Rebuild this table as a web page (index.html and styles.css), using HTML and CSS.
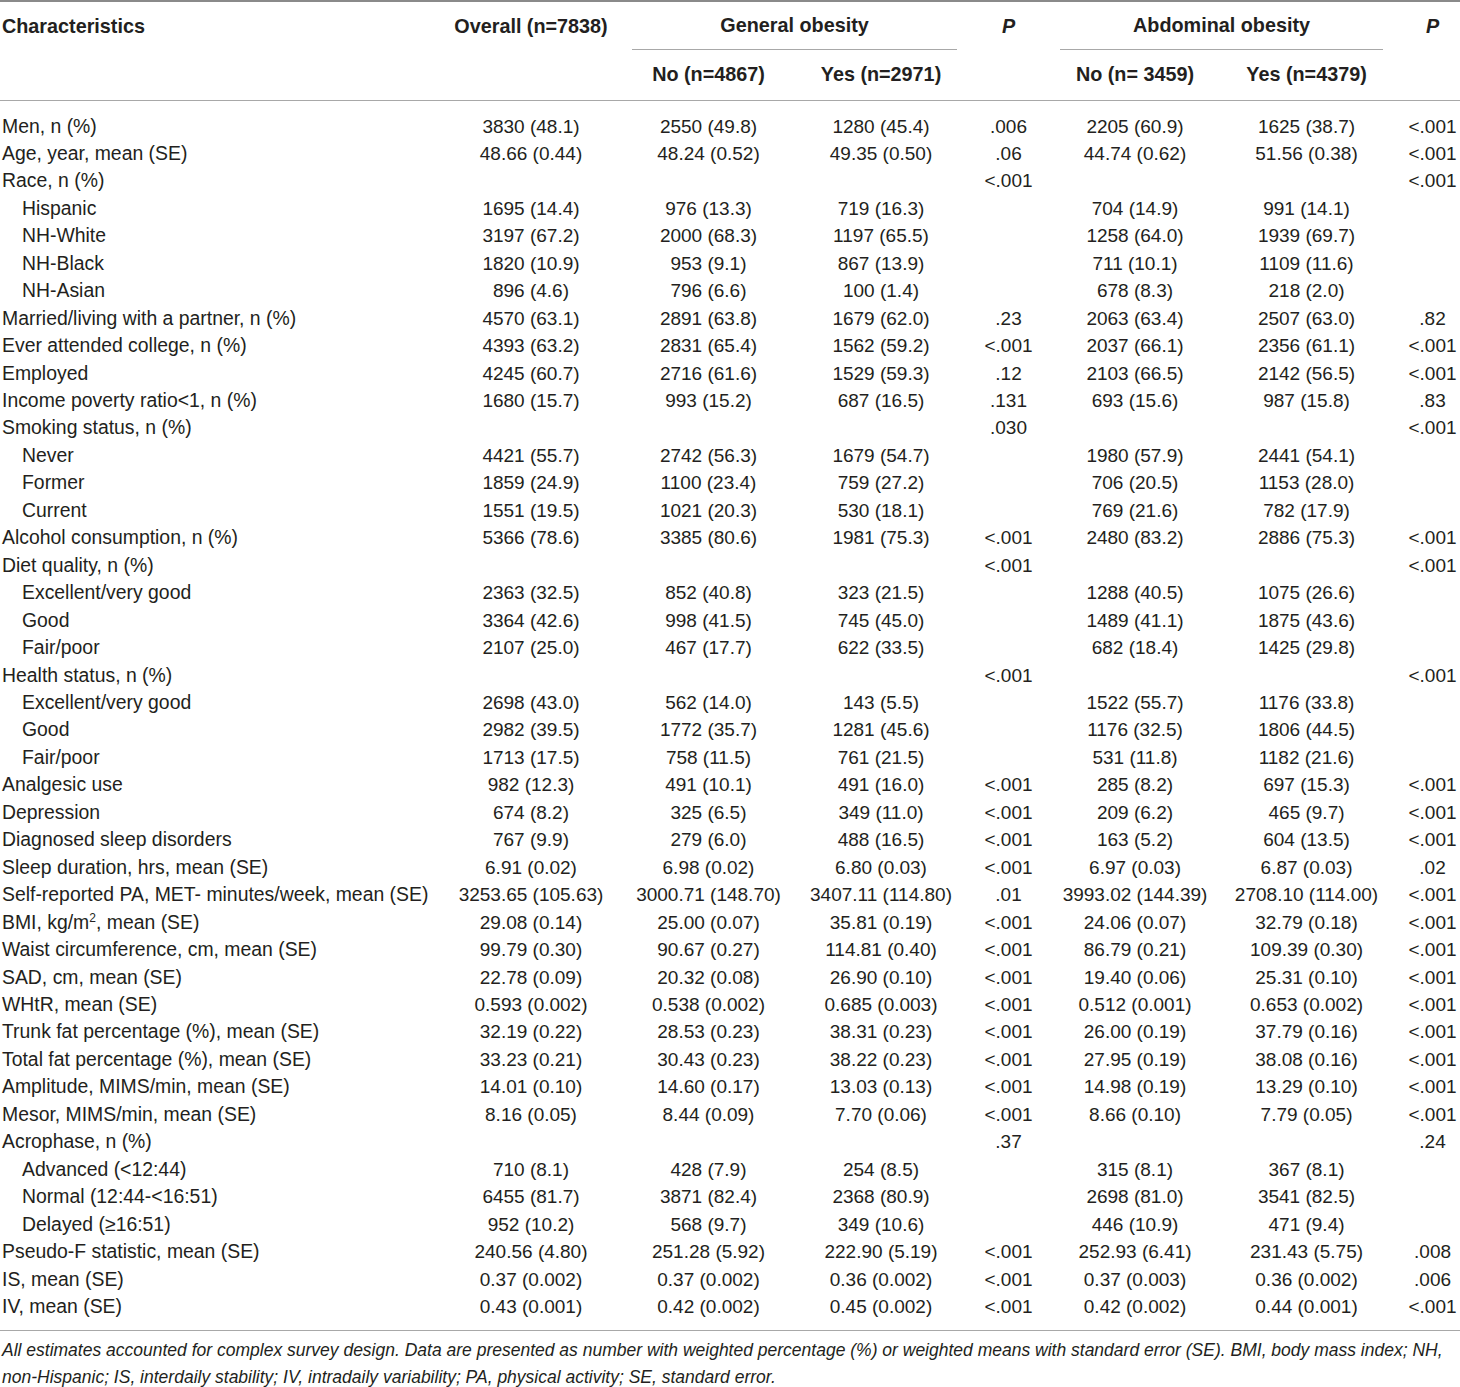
FILE: index.html
```html
<!DOCTYPE html>
<html>
<head>
<meta charset="utf-8">
<link rel="stylesheet" href="styles.css">
</head>
<body>
<div class="page">
<table class="tbl">
<colgroup>
<col class="c-label"><col class="c-overall"><col class="c-gno"><col class="c-gyes"><col class="c-p1"><col class="c-ano"><col class="c-ayes"><col class="c-p2">
</colgroup>
<thead>
<tr class="h1">
<th class="lab top" rowspan="2">Characteristics</th>
<th class="top" rowspan="2">Overall (n=7838)</th>
<th colspan="2"><div class="grp">General obesity</div></th>
<th class="top" rowspan="2"><i>P</i></th>
<th colspan="2"><div class="grp">Abdominal obesity</div></th>
<th class="top p2" rowspan="2"><i>P</i></th>
</tr>
<tr class="h2">
<th>No (n=4867)</th>
<th>Yes (n=2971)</th>
<th>No (n= 3459)</th>
<th>Yes (n=4379)</th>
</tr>
</thead>
<tbody>
<tr><td>Men, n (%)</td><td>3830 (48.1)</td><td>2550 (49.8)</td><td>1280 (45.4)</td><td>.006</td><td>2205 (60.9)</td><td>1625 (38.7)</td><td class="p2">&lt;.001</td></tr>
<tr><td>Age, year, mean (SE)</td><td>48.66 (0.44)</td><td>48.24 (0.52)</td><td>49.35 (0.50)</td><td>.06</td><td>44.74 (0.62)</td><td>51.56 (0.38)</td><td class="p2">&lt;.001</td></tr>
<tr><td>Race, n (%)</td><td></td><td></td><td></td><td>&lt;.001</td><td></td><td></td><td class="p2">&lt;.001</td></tr>
<tr><td class="ind">Hispanic</td><td>1695 (14.4)</td><td>976 (13.3)</td><td>719 (16.3)</td><td></td><td>704 (14.9)</td><td>991 (14.1)</td><td class="p2"></td></tr>
<tr><td class="ind">NH-White</td><td>3197 (67.2)</td><td>2000 (68.3)</td><td>1197 (65.5)</td><td></td><td>1258 (64.0)</td><td>1939 (69.7)</td><td class="p2"></td></tr>
<tr><td class="ind">NH-Black</td><td>1820 (10.9)</td><td>953 (9.1)</td><td>867 (13.9)</td><td></td><td>711 (10.1)</td><td>1109 (11.6)</td><td class="p2"></td></tr>
<tr><td class="ind">NH-Asian</td><td>896 (4.6)</td><td>796 (6.6)</td><td>100 (1.4)</td><td></td><td>678 (8.3)</td><td>218 (2.0)</td><td class="p2"></td></tr>
<tr><td>Married/living with a partner, n (%)</td><td>4570 (63.1)</td><td>2891 (63.8)</td><td>1679 (62.0)</td><td>.23</td><td>2063 (63.4)</td><td>2507 (63.0)</td><td class="p2">.82</td></tr>
<tr><td>Ever attended college, n (%)</td><td>4393 (63.2)</td><td>2831 (65.4)</td><td>1562 (59.2)</td><td>&lt;.001</td><td>2037 (66.1)</td><td>2356 (61.1)</td><td class="p2">&lt;.001</td></tr>
<tr><td>Employed</td><td>4245 (60.7)</td><td>2716 (61.6)</td><td>1529 (59.3)</td><td>.12</td><td>2103 (66.5)</td><td>2142 (56.5)</td><td class="p2">&lt;.001</td></tr>
<tr><td>Income poverty ratio&lt;1, n (%)</td><td>1680 (15.7)</td><td>993 (15.2)</td><td>687 (16.5)</td><td>.131</td><td>693 (15.6)</td><td>987 (15.8)</td><td class="p2">.83</td></tr>
<tr><td>Smoking status, n (%)</td><td></td><td></td><td></td><td>.030</td><td></td><td></td><td class="p2">&lt;.001</td></tr>
<tr><td class="ind">Never</td><td>4421 (55.7)</td><td>2742 (56.3)</td><td>1679 (54.7)</td><td></td><td>1980 (57.9)</td><td>2441 (54.1)</td><td class="p2"></td></tr>
<tr><td class="ind">Former</td><td>1859 (24.9)</td><td>1100 (23.4)</td><td>759 (27.2)</td><td></td><td>706 (20.5)</td><td>1153 (28.0)</td><td class="p2"></td></tr>
<tr><td class="ind">Current</td><td>1551 (19.5)</td><td>1021 (20.3)</td><td>530 (18.1)</td><td></td><td>769 (21.6)</td><td>782 (17.9)</td><td class="p2"></td></tr>
<tr><td>Alcohol consumption, n (%)</td><td>5366 (78.6)</td><td>3385 (80.6)</td><td>1981 (75.3)</td><td>&lt;.001</td><td>2480 (83.2)</td><td>2886 (75.3)</td><td class="p2">&lt;.001</td></tr>
<tr><td>Diet quality, n (%)</td><td></td><td></td><td></td><td>&lt;.001</td><td></td><td></td><td class="p2">&lt;.001</td></tr>
<tr><td class="ind">Excellent/very good</td><td>2363 (32.5)</td><td>852 (40.8)</td><td>323 (21.5)</td><td></td><td>1288 (40.5)</td><td>1075 (26.6)</td><td class="p2"></td></tr>
<tr><td class="ind">Good</td><td>3364 (42.6)</td><td>998 (41.5)</td><td>745 (45.0)</td><td></td><td>1489 (41.1)</td><td>1875 (43.6)</td><td class="p2"></td></tr>
<tr><td class="ind">Fair/poor</td><td>2107 (25.0)</td><td>467 (17.7)</td><td>622 (33.5)</td><td></td><td>682 (18.4)</td><td>1425 (29.8)</td><td class="p2"></td></tr>
<tr><td>Health status, n (%)</td><td></td><td></td><td></td><td>&lt;.001</td><td></td><td></td><td class="p2">&lt;.001</td></tr>
<tr><td class="ind">Excellent/very good</td><td>2698 (43.0)</td><td>562 (14.0)</td><td>143 (5.5)</td><td></td><td>1522 (55.7)</td><td>1176 (33.8)</td><td class="p2"></td></tr>
<tr><td class="ind">Good</td><td>2982 (39.5)</td><td>1772 (35.7)</td><td>1281 (45.6)</td><td></td><td>1176 (32.5)</td><td>1806 (44.5)</td><td class="p2"></td></tr>
<tr><td class="ind">Fair/poor</td><td>1713 (17.5)</td><td>758 (11.5)</td><td>761 (21.5)</td><td></td><td>531 (11.8)</td><td>1182 (21.6)</td><td class="p2"></td></tr>
<tr><td>Analgesic use</td><td>982 (12.3)</td><td>491 (10.1)</td><td>491 (16.0)</td><td>&lt;.001</td><td>285 (8.2)</td><td>697 (15.3)</td><td class="p2">&lt;.001</td></tr>
<tr><td>Depression</td><td>674 (8.2)</td><td>325 (6.5)</td><td>349 (11.0)</td><td>&lt;.001</td><td>209 (6.2)</td><td>465 (9.7)</td><td class="p2">&lt;.001</td></tr>
<tr><td>Diagnosed sleep disorders</td><td>767 (9.9)</td><td>279 (6.0)</td><td>488 (16.5)</td><td>&lt;.001</td><td>163 (5.2)</td><td>604 (13.5)</td><td class="p2">&lt;.001</td></tr>
<tr><td>Sleep duration, hrs, mean (SE)</td><td>6.91 (0.02)</td><td>6.98 (0.02)</td><td>6.80 (0.03)</td><td>&lt;.001</td><td>6.97 (0.03)</td><td>6.87 (0.03)</td><td class="p2">.02</td></tr>
<tr><td>Self-reported PA, MET- minutes/week, mean (SE)</td><td>3253.65 (105.63)</td><td>3000.71 (148.70)</td><td>3407.11 (114.80)</td><td>.01</td><td>3993.02 (144.39)</td><td>2708.10 (114.00)</td><td class="p2">&lt;.001</td></tr>
<tr><td>BMI, kg/m<sup>2</sup>, mean (SE)</td><td>29.08 (0.14)</td><td>25.00 (0.07)</td><td>35.81 (0.19)</td><td>&lt;.001</td><td>24.06 (0.07)</td><td>32.79 (0.18)</td><td class="p2">&lt;.001</td></tr>
<tr><td>Waist circumference, cm, mean (SE)</td><td>99.79 (0.30)</td><td>90.67 (0.27)</td><td>114.81 (0.40)</td><td>&lt;.001</td><td>86.79 (0.21)</td><td>109.39 (0.30)</td><td class="p2">&lt;.001</td></tr>
<tr><td>SAD, cm, mean (SE)</td><td>22.78 (0.09)</td><td>20.32 (0.08)</td><td>26.90 (0.10)</td><td>&lt;.001</td><td>19.40 (0.06)</td><td>25.31 (0.10)</td><td class="p2">&lt;.001</td></tr>
<tr><td>WHtR, mean (SE)</td><td>0.593 (0.002)</td><td>0.538 (0.002)</td><td>0.685 (0.003)</td><td>&lt;.001</td><td>0.512 (0.001)</td><td>0.653 (0.002)</td><td class="p2">&lt;.001</td></tr>
<tr><td>Trunk fat percentage (%), mean (SE)</td><td>32.19 (0.22)</td><td>28.53 (0.23)</td><td>38.31 (0.23)</td><td>&lt;.001</td><td>26.00 (0.19)</td><td>37.79 (0.16)</td><td class="p2">&lt;.001</td></tr>
<tr><td>Total fat percentage (%), mean (SE)</td><td>33.23 (0.21)</td><td>30.43 (0.23)</td><td>38.22 (0.23)</td><td>&lt;.001</td><td>27.95 (0.19)</td><td>38.08 (0.16)</td><td class="p2">&lt;.001</td></tr>
<tr><td>Amplitude, MIMS/min, mean (SE)</td><td>14.01 (0.10)</td><td>14.60 (0.17)</td><td>13.03 (0.13)</td><td>&lt;.001</td><td>14.98 (0.19)</td><td>13.29 (0.10)</td><td class="p2">&lt;.001</td></tr>
<tr><td>Mesor, MIMS/min, mean (SE)</td><td>8.16 (0.05)</td><td>8.44 (0.09)</td><td>7.70 (0.06)</td><td>&lt;.001</td><td>8.66 (0.10)</td><td>7.79 (0.05)</td><td class="p2">&lt;.001</td></tr>
<tr><td>Acrophase, n (%)</td><td></td><td></td><td></td><td>.37</td><td></td><td></td><td class="p2">.24</td></tr>
<tr><td class="ind">Advanced (&lt;12:44)</td><td>710 (8.1)</td><td>428 (7.9)</td><td>254 (8.5)</td><td></td><td>315 (8.1)</td><td>367 (8.1)</td><td class="p2"></td></tr>
<tr><td class="ind">Normal (12:44-&lt;16:51)</td><td>6455 (81.7)</td><td>3871 (82.4)</td><td>2368 (80.9)</td><td></td><td>2698 (81.0)</td><td>3541 (82.5)</td><td class="p2"></td></tr>
<tr><td class="ind">Delayed (≥16:51)</td><td>952 (10.2)</td><td>568 (9.7)</td><td>349 (10.6)</td><td></td><td>446 (10.9)</td><td>471 (9.4)</td><td class="p2"></td></tr>
<tr><td>Pseudo-F statistic, mean (SE)</td><td>240.56 (4.80)</td><td>251.28 (5.92)</td><td>222.90 (5.19)</td><td>&lt;.001</td><td>252.93 (6.41)</td><td>231.43 (5.75)</td><td class="p2">.008</td></tr>
<tr><td>IS, mean (SE)</td><td>0.37 (0.002)</td><td>0.37 (0.002)</td><td>0.36 (0.002)</td><td>&lt;.001</td><td>0.37 (0.003)</td><td>0.36 (0.002)</td><td class="p2">.006</td></tr>
<tr><td>IV, mean (SE)</td><td>0.43 (0.001)</td><td>0.42 (0.002)</td><td>0.45 (0.002)</td><td>&lt;.001</td><td>0.42 (0.002)</td><td>0.44 (0.001)</td><td class="p2">&lt;.001</td></tr>
</tbody>
</table>
<p class="note">All estimates accounted for complex survey design. Data are presented as number with weighted percentage (%) or weighted means with standard error (SE). BMI, body mass index; NH,<br>non-Hispanic; IS, interdaily stability; IV, intradaily variability; PA, physical activity; SE, standard error.</p>
</div>
</body>
</html>
```
FILE: styles.css
```css
html, body {
  margin: 0;
  padding: 0;
  background: #ffffff;
}
body {
  font-family: "Liberation Sans", Arial, sans-serif;
  color: #231f20;
  width: 1460px;
}
.page {
  width: 1460px;
}
.tbl {
  width: 1460px;
  border-collapse: collapse;
  table-layout: fixed;
  font-size: 19px;
  border-top: 2px solid #8a8a8a;
}
.c-label { width: 440px; }
.c-overall { width: 182px; }
.c-gno { width: 173px; }
.c-gyes { width: 172px; }
.c-p1 { width: 83px; }
.c-ano { width: 170px; }
.c-ayes { width: 173px; }
.c-p2 { width: 67px; }

thead {
  border-bottom: 1.5px solid #a8a8a8;
}
th {
  font-weight: bold;
  font-size: 19.8px;
  padding: 0;
  text-align: center;
  white-space: nowrap;
}
th.top {
  vertical-align: top;
  line-height: 48px;
}
th.lab {
  text-align: left;
  padding-left: 2px;
}
.h1 { height: 48px; }
.h2 { height: 50px; }
.h2 th { vertical-align: middle; }
.grp {
  margin: 0 10px;
  line-height: 47px;
  border-bottom: 1.5px solid #a8a8a8;
}
td {
  padding: 0;
  line-height: 27.45px;
  text-align: center;
  white-space: nowrap;
}
td:first-child {
  text-align: left;
  padding-left: 2px;
  font-size: 19.4px;
}
td.ind {
  padding-left: 22px;
}
.p2 {
  padding-left: 12px;
}
tbody tr:first-child td {
  padding-top: 12px;
}
tbody tr:last-child td {
  padding-bottom: 10px;
}
tbody {
  border-bottom: 1.5px solid #a8a8a8;
}
sup {
  font-size: 12px;
  line-height: 0;
}
.note {
  margin: 0;
  padding: 6px 0 0 2px;
  font-style: italic;
  font-size: 17.5px;
  line-height: 27px;
}
```
